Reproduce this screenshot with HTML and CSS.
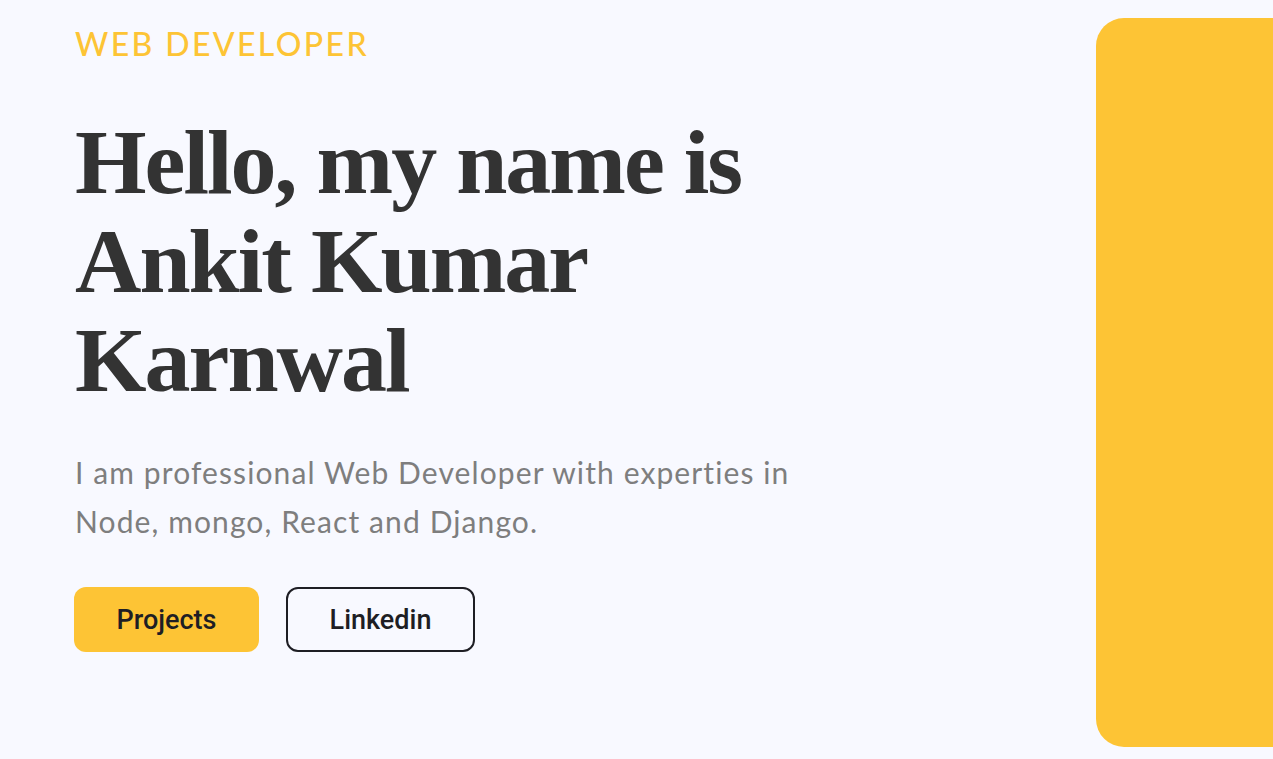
FILE: index.html
```html
<!DOCTYPE html>
<html lang="en">
<head>
<meta charset="utf-8">
<title>Ankit Kumar Karnwal</title>
<link rel="stylesheet" href="styles.css">
</head>
<body>
<div class="page">
  <section class="intro">
    <p class="role">WEB DEVELOPER</p>
    <h1 class="title">Hello, my name is Ankit Kumar Karnwal</h1>
    <p class="desc">I am professional Web Developer with experties in Node, mongo, React and Django.</p>
    <div class="actions">
      <a class="btn btn-primary" href="#">Projects</a>
      <a class="btn btn-outline" href="#">Linkedin</a>
    </div>
  </section>
  <aside class="card"></aside>
</div>
</body>
</html>
```
FILE: styles.css
```css
html, body {
  margin: 0;
  padding: 0;
  background: #f8f9ff;
  overflow: hidden;
}
.page {
  display: flex;
  justify-content: space-between;
  height: 759px;
  width: 1273px;
}
.intro {
  padding-left: 74px;
  padding-top: 24px;
  width: 760px;
}
.role {
  margin: 0 0 0 1px;
  font-family: "Lato", "Liberation Sans", sans-serif;
  font-size: 32px;
  line-height: 40px;
  color: #fdc435;
  font-weight: 500;
  letter-spacing: 2.4px;
}
.title {
  margin: 49px 0 0 1px;
  font-family: "Liberation Serif", serif;
  font-weight: 700;
  font-size: 92px;
  line-height: 99px;
  color: #333333;
  letter-spacing: -2px;
  width: 700px;
}
.desc {
  margin: 38px 0 0 1px;
  font-family: "Lato", "Open Sans", sans-serif;
  font-size: 30px;
  line-height: 49px;
  color: #7e7e7e;
  letter-spacing: 1.1px;
  width: 740px;
}
.actions {
  display: flex;
  gap: 27px;
  margin-top: 41px;
}
.btn {
  display: flex;
  align-items: center;
  justify-content: center;
  height: 65px;
  box-sizing: border-box;
  border-radius: 12px;
  font-family: "Roboto", sans-serif;
  font-weight: 500;
  font-size: 27px;
  color: #1e1e24;
  text-decoration: none;
}
.btn-primary {
  background: #fdc435;
  width: 185px;
}
.btn-outline {
  width: 189px;
  border: 2px solid #1e1e24;
}
.card {
  margin-top: 18px;
  width: 177px;
  height: 729px;
  background: #fdc435;
  border-radius: 28px 0 0 28px;
}
```
